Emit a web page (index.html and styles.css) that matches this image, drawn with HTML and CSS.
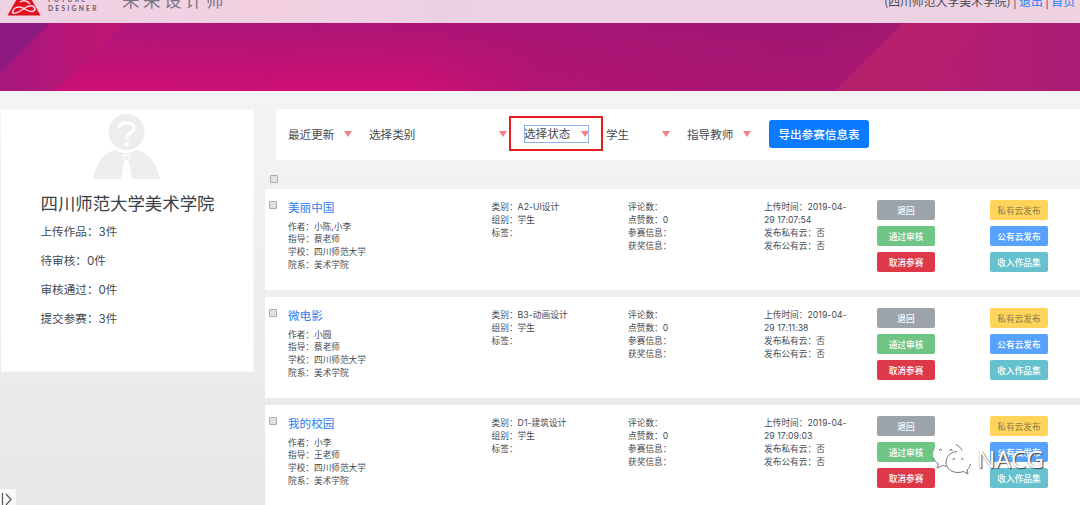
FILE: index.html
```html
<!DOCTYPE html>
<html lang="zh-CN">
<head>
<meta charset="utf-8">
<title>未来设计师</title>
<link rel="stylesheet" href="styles.css">
</head>
<body>
<header class="topbar">
  <svg class="logo" width="34" height="36" viewBox="0 0 34 36">
    <path d="M17 6 L33.500 35.500 H.5 Z" fill="#e60f1e"/>
    <path d="M5.500 33 C6 27 12 25.500 17 28.500 C22 32 27 33 28 29 C27 24.500 22 25 17 28.500 C13 31.500 9 34 5.500 33 M13 22 C17 19.500 21 21 23 24" fill="none" stroke="#f6d3e2" stroke-width="1.500"/>
  </svg>
  <div class="brand"><span>FUTURE</span><span>DESIGNER</span></div>
  <div class="brand-cn">未来设计师</div>
  <div class="account">(四川师范大学美术学院) | <a>退出</a> | <a>首页</a></div>
</header>
<div class="banner">
  <svg width="1080" height="68" viewBox="0 0 1080 68">
    <defs>
      <linearGradient id="base" x1="0" y1="0" x2="1" y2="0">
        <stop offset="0" stop-color="#b4167a"/><stop offset=".38" stop-color="#ac1576"/>
        <stop offset=".75" stop-color="#9f1873"/><stop offset="1" stop-color="#a81b72"/>
      </linearGradient>
      <linearGradient id="glow" x1="0" y1="0" x2="0" y2="1">
        <stop offset="0" stop-color="#d00f74" stop-opacity="0"/><stop offset="1" stop-color="#d30f74" stop-opacity=".9"/>
      </linearGradient>
      <linearGradient id="spread" x1="0" y1="0" x2="1" y2="0">
        <stop offset="0" stop-color="#fff"/><stop offset=".38" stop-color="#fff"/>
        <stop offset=".5" stop-color="#444"/><stop offset="1" stop-color="#333"/>
      </linearGradient>
      <mask id="spreadMask"><rect width="1080" height="68" fill="url(#spread)"/></mask>
      <linearGradient id="left" x1="0" y1="0" x2="1" y2="0">
        <stop offset="0" stop-color="#a5187e"/><stop offset="1" stop-color="#c31571"/>
      </linearGradient>
      <linearGradient id="right" x1="0" y1="0" x2="1" y2="0">
        <stop offset="0" stop-color="#b32069"/><stop offset=".4" stop-color="#b81f70"/><stop offset="1" stop-color="#ac1c75"/>
      </linearGradient>
      <pattern id="lines" width="7" height="7" patternUnits="userSpaceOnUse" patternTransform="rotate(45)">
        <rect width="3" height="7" fill="#7d1685" opacity=".1"/>
      </pattern>
    </defs>
    <rect width="1080" height="68" fill="url(#base)"/>
    <rect width="1080" height="68" fill="url(#glow)" mask="url(#spreadMask)"/>
    <path d="M124 0 H325 L262 68 H56Z" fill="url(#lines)"/>
    <path d="M0 0H124L56 68H0Z" fill="url(#left)"/>
    <path d="M0 0H50L0 50Z" fill="#8c1a80"/>
    <path d="M903 0H1080V68H835Z" fill="url(#right)"/>
    <path d="M990 0H1080V68H922Z" fill="url(#lines)"/>
  </svg>
</div>
<main class="content">
  <aside class="profile">
    <svg class="avatar" width="68" height="68" viewBox="0 0 68 68">
      <path d="M0 66 C3 51 10 40 22 37 Q33 43 44 37 C56 40 64 51 67 66Z" fill="#ededed"/>
      <path d="M28.500 42 H38 L35.500 47 L39 66 H28 L31.500 47Z" fill="#fff"/>
      <path d="M30.500 43 H36.500 L34.500 47 H32.500Z" fill="#ededed"/>
      <circle cx="33.500" cy="20" r="19.500" fill="#fff"/>
      <circle cx="33.500" cy="19" r="18" fill="#ededed"/>
      <path d="M26 15 C26 8 41 8 41 15 C41 20 33.500 19.500 33.500 26" fill="none" stroke="#fff" stroke-width="3"/>
      <circle cx="33.500" cy="31" r="2" fill="#fff"/>
    </svg>
    <h1>四川师范大学美术学院</h1>
    <p>上传作品：3件</p>
    <p>待审核：0件</p>
    <p>审核通过：0件</p>
    <p>提交参赛：3件</p>
  </aside>
  <section class="works">
    <div class="filters">
      <div class="select s1">最近更新<i></i></div>
      <div class="select s2">选择类别<i></i></div>
      <div class="marked"><div class="select s3">选择状态<i></i></div></div>
      <div class="select s4">学生<i></i></div>
      <div class="select s5">指导教师<i></i></div>
      <button class="export">导出参赛信息表</button>
    </div>
    <div class="select-all"><span class="check"></span></div>

    <article class="work">
      <span class="check"></span>
      <div class="info"><h2>美丽中国</h2>作者：小陈,小李<br>指导：蔡老师<br>学校：四川师范大学<br>院系：美术学院</div>
      <div class="cell">类别：A2-UI设计<br>组别：学生<br>标签：</div>
      <div class="cell">评论数：<br>点赞数：0<br>参赛信息：<br>获奖信息：</div>
      <div class="cell">上传时间：2019-04-<br>29 17:07:54<br>发布私有云：否<br>发布公有云：否</div>
      <div class="actions"><button class="gray">退回</button><button class="green">通过审核</button><button class="red">取消参赛</button></div>
      <div class="actions"><button class="yellow">私有云发布</button><button class="blue">公有云发布</button><button class="teal">收入作品集</button></div>
    </article>

    <article class="work">
      <span class="check"></span>
      <div class="info"><h2>微电影</h2>作者：小圆<br>指导：蔡老师<br>学校：四川师范大学<br>院系：美术学院</div>
      <div class="cell">类别：B3-动画设计<br>组别：学生<br>标签：</div>
      <div class="cell">评论数：<br>点赞数：0<br>参赛信息：<br>获奖信息：</div>
      <div class="cell">上传时间：2019-04-<br>29 17:11:38<br>发布私有云：否<br>发布公有云：否</div>
      <div class="actions"><button class="gray">退回</button><button class="green">通过审核</button><button class="red">取消参赛</button></div>
      <div class="actions"><button class="yellow">私有云发布</button><button class="blue">公有云发布</button><button class="teal">收入作品集</button></div>
    </article>

    <article class="work">
      <span class="check"></span>
      <div class="info"><h2>我的校园</h2>作者：小李<br>指导：王老师<br>学校：四川师范大学<br>院系：美术学院</div>
      <div class="cell">类别：D1-建筑设计<br>组别：学生<br>标签：</div>
      <div class="cell">评论数：<br>点赞数：0<br>参赛信息：<br>获奖信息：</div>
      <div class="cell">上传时间：2019-04-<br>29 17:09:03<br>发布私有云：否<br>发布公有云：否</div>
      <div class="actions"><button class="gray">退回</button><button class="green">通过审核</button><button class="red">取消参赛</button></div>
      <div class="actions"><button class="yellow">私有云发布</button><button class="blue">公有云发布</button><button class="teal">收入作品集</button></div>
    </article>
  </section>
</main>

<div class="drawer-toggle">
  <svg width="16" height="16" viewBox="0 0 16 16"><path d="M2.500 4V16M6 5L11 10.500L6 16" fill="none" stroke="#555" stroke-width="1.200"/></svg>
</div>

<div class="watermark">
  <svg width="40" height="34" viewBox="0 0 40 34">
    <path d="M17 1 C8 1 1 6.500 1 13.500 C1 17.500 3 20.500 6.500 22.500 L5 27 L10.500 24.500 C14 25.500 16 25.500 18 25 L31 8 C28 3.500 23 1 17 1Z" fill="#fff"/>
    <path d="M1.500 17 C2.500 20 4 21.500 6.500 22.800 L5 27 L10.500 24.500 L14 25.200 M24 3.500 C27 5 29 7 30 9.500" fill="none" stroke="#666" stroke-width=".9"/>
    <path d="M26 11 C19 11 14 15.500 14 21 C14 27 19 31.500 26 31.500 C28 31.500 30 31 31.500 30.500 L36 33 L35 29 C37.500 27 38.500 24.500 38.500 21 C38.500 15.500 33 11 26 11Z" fill="#fff"/>
    <path d="M25 10.500 C19 11 14 15.500 14 21 C14 27 19 31.500 26 31.500 C28 31.500 30 31 31.500 30.500 L36 33 L35 29 C37 27.500 38 25.500 38.500 23" fill="none" stroke="#666" stroke-width=".9"/>
    <path d="M7 9.500 q1.500 -2.500 3 0 M17.500 9.500 q1.500 -2.500 3 0 M20.500 18.500 q1.300 -2.500 2.600 0 M29 18.500 q1.300 -2.500 2.600 0" fill="none" stroke="#555" stroke-width="1"/>
  </svg>
  <span>NACG</span>
</div>
</body>
</html>
```

FILE: styles.css
```css
* { box-sizing: border-box; }

html { overflow: hidden; }

body {
  margin: 0;
  height: 505px;
  overflow: hidden;
  position: relative;
  background: linear-gradient(#f4f4f4 90px, #e7e7e7 505px);
  color: #454a52;
  font-family: "Noto Sans CJK SC", sans-serif;
}

.topbar {
  display: flex;
  align-items: flex-end;
  height: 23px;
  overflow: hidden;
  background: linear-gradient(90deg, #eed2e3, #f2d0e2 25%, #ebd1e3 45%, #ebd1e3 80%, #f0d2e2);
}

.logo { flex: none; margin: 0 0 7px 7px; }

.brand {
  display: flex;
  flex-direction: column;
  flex: none;
  width: 74px;
  margin-left: 7px;
  padding-bottom: 10px;
  font: bold 6.600px/9px Lato, sans-serif;
  letter-spacing: 2.300px;
  color: #6b5a68;
}

.brand-cn {
  flex: none;
  font-size: 17.500px;
  line-height: 20px;
  letter-spacing: 3.500px;
  padding-bottom: 13px;
  color: #7b7685;
}

.account {
  margin-left: auto;
  padding: 0 5px 12px 0;
  font-size: 11.850px;
  line-height: 20px;
  white-space: nowrap;
}

.account a { color: #1780f5; }

.banner { height: 68px; }
.banner svg { display: block; }

.content {
  display: grid;
  grid-template-columns: 252.500px 815px;
  column-gap: 11.500px;
  align-items: start;
  height: 414px;
  overflow: hidden;
  padding: 18px 0 0 1px;
}

.profile {
  height: 263px;
  padding: 3px 0 0 39.500px;
  background: #fff;
  border: 1px solid #f8f8f8;
  border-left: 0;
}

.avatar { display: block; margin-left: 52px; }

.profile h1 {
  margin: 9px 0 0;
  font-size: 17.400px;
  line-height: 26px;
  font-weight: 400;
  color: #3b3f45;
}

.profile p {
  margin: 0 0 9px;
  font-family: Inter, "Noto Sans CJK SC", sans-serif;
  font-size: 11.600px;
  line-height: 20px;
}
.profile h1 + p { margin-top: 6px; }

.filters {
  display: flex;
  align-items: center;
  height: 51px;
  margin-left: 11px;
  padding: 0 0 1px 12px;
  background: #fff;
}

.select {
  display: flex;
  flex: none;
  align-items: center;
  justify-content: space-between;
  font-size: 11.600px;
  line-height: 17px;
  white-space: nowrap;
}

.select i {
  border: 4px solid transparent;
  border-top: 6px solid #f57f86;
  border-bottom: 0;
}

.s1 { width: 64px; }
.s2 { width: 138px; margin-left: 17px; }
.marked {
  flex: none;
  display: flex;
  width: 94px;
  height: 35px;
  margin: -2px 0 0 2px;
  border: 2px solid #e61c20;
  padding: 7px 0 0 13px;
}
.s3 { width: 65px; height: 18px; outline: 1px solid #8fb2f4; outline-offset: -1px; }
.s4 { width: 64px; margin-left: 3px; }
.s5 { width: 64px; margin-left: 17px; }

button {
  display: block;
  border: 0;
  padding: 0;
  color: #fff;
  font-family: "Noto Sans CJK SC", sans-serif;
}

.export {
  flex: none;
  width: 100px;
  height: 28px;
  margin-left: 18px;
  border-radius: 3px;
  background: #0a7bff;
  font-size: 11.600px;
  font-weight: 500;
  line-height: 27px;
}

.check {
  display: block;
  width: 8px;
  height: 8px;
  border: 1px solid #aaa;
  border-radius: 1px;
  background: #e2e2e2;
}

.select-all { height: 29px; padding: 15px 0 0 5px; }

.work {
  display: grid;
  grid-template-columns: 19px 203.500px 136.500px 136px 113px 113px 58px;
  align-items: start;
  height: 101px;
  margin-bottom: 7px;
  padding: 12px 0 0 4px;
  background: #fff;
  font-family: Inter, "Noto Sans CJK SC", sans-serif;
  font-size: 8.670px;
  line-height: 12.850px;
}

.info h2 {
  margin: -2.500px 0 3px;
  font-size: 11.600px;
  font-weight: 400;
  line-height: 19px;
  color: #2f7df0;
}

.cell { white-space: nowrap; letter-spacing: .05px; }

.actions { display: grid; gap: 6px; margin-top: -1px; }

.actions button {
  width: 58px;
  height: 20px;
  border-radius: 2px;
  font-size: 8.670px;
  font-weight: 500;
  line-height: 19px;
}

.gray { background: #9da3aa; }
.green { background: #70c584; }
.red { background: #dc3848; }
.actions .yellow { background: #ffd45a; color: #8b7b4c; font-weight: 400; }
.blue { background: #57a2ff; }
.teal { background: #66c1cf; }

.drawer-toggle {
  position: absolute;
  left: 0;
  bottom: 0;
  width: 16px;
  height: 16px;
  background: #f8f8f8;
}
.drawer-toggle svg { display: block; }

.watermark {
  position: absolute;
  left: 932px;
  top: 441px;
  display: flex;
  gap: 5px;
}

.watermark span {
  margin-top: 3px;
  font: 400 24.500px/30px "Open Sans", sans-serif;
  color: #fff;
  text-shadow: 1px 1px 1px #444, 0 0 1px #999;
}
```
